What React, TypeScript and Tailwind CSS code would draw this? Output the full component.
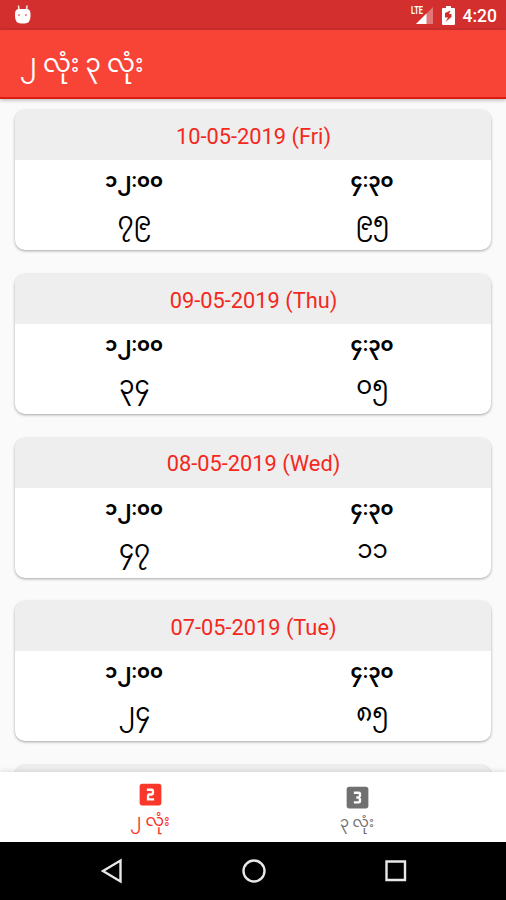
import clsx from "clsx";
import { MdLooks3, MdLooksTwo } from "react-icons/md";

type Draw = { date: string; noon: string; evening: string };

const draws: Draw[] = [
  { date: "10-05-2019 (Fri)", noon: "၇၉", evening: "၉၅" },
  { date: "09-05-2019 (Thu)", noon: "၃၄", evening: "၀၅" },
  { date: "08-05-2019 (Wed)", noon: "၄၇", evening: "၁၁" },
  { date: "07-05-2019 (Tue)", noon: "၂၄", evening: "၈၅" },
];

const StatusBar: React.FC = () => (
  <div className="flex h-[30px] shrink-0 items-center bg-[#d32f2f] pl-[14px] pr-[9px] text-white">
    <svg width="18" height="20" viewBox="0 0 18 20" fill="currentColor">
      <path d="M4.500 .5l.5 4.500M13 .5l-.5 4.500" stroke="currentColor" strokeWidth="1.6" opacity=".85" />
      <path d="M1 9q0-5 4-5h7.500q4 0 4 5v2q0 7.500-6 7.500h-3.500q-6 0-6-7.500z" />
      <circle cx="5" cy="10" r="1" fill="#e07a7a" />
      <circle cx="12" cy="10" r="1" fill="#e07a7a" />
    </svg>
    <div className="ml-auto flex items-center">
      <svg width="23" height="20" viewBox="0 0 23 20" fill="currentColor">
        <path d="M22 2v17H5z" opacity=".35" />
        <path d="M15.500 8.500v10.500H5z" />
        <text
          x="0"
          y="9"
          fontSize="10"
          fontWeight="700"
          textLength="12"
          lengthAdjust="spacingAndGlyphs"
          fontFamily="Roboto, sans-serif"
        >
          LTE
        </text>
      </svg>
      <svg className="ml-2" width="13" height="19" viewBox="0 0 13 19" fill="currentColor">
        <path d="M4 0h5v2h3q1 0 1 1v15q0 1-1 1H1q-1 0-1-1V3q0-1 1-1h3z" />
        <path d="M8.500 4.500L3 7v4.500h3l-2.500 4.500L9.500 11V8H7z" fill="#d32f2f" />
      </svg>
      <span className="ml-2 pt-[3px] text-[17.5px] font-medium leading-none">4:20</span>
    </div>
  </div>
);

const DrawCard: React.FC<{ draw: Draw }> = ({ draw }) => (
  <section className="h-[140px] shrink-0 overflow-hidden rounded-[10px] bg-white shadow-[0_1px_3px_rgba(0,0,0,0.35)]">
    <h2 className="flex h-[50px] items-center justify-center bg-[#eeeeee] pl-px pt-1 text-[21.8px] text-[#f4281c]">
      {draw.date}
    </h2>
    <div className="grid grid-cols-2 text-center text-black">
      <span className="h-[42px] text-[19.5px] font-bold leading-[42px]">၁၂:၀၀</span>
      <span className="h-[42px] text-[19.5px] font-bold leading-[42px]">၄:၃၀</span>
      <span className="h-[46px] pl-px text-[24.5px] leading-[40px]">{draw.noon}</span>
      <span className="h-[46px] pl-px text-[24.5px] leading-[40px]">{draw.evening}</span>
    </div>
  </section>
);

const App: React.FC = () => (
  <div className="flex h-[900px] w-[506px] flex-col overflow-hidden bg-[#fafafa] font-['Roboto','Noto_Sans_Myanmar','Noto_Sans',sans-serif]">
    <StatusBar />
    <header className="z-10 flex h-[69px] shrink-0 items-center border-b-2 border-[#dc1c14] bg-[#f74437] pl-[20px] text-[24.8px] text-white shadow-[0_1px_4px_rgba(0,0,0,0.3)]">
      ၂ လုံး ၃ လုံး
    </header>
    <main className="flex min-h-0 flex-1 flex-col gap-[23.7px] overflow-hidden px-[15px] pt-[11.4px]">
      {draws.map((draw) => (
        <DrawCard key={draw.date} draw={draw} />
      ))}
      {/* top edge of the next card, still below the fold */}
      <div className="h-[50px] shrink-0 rounded-t-[10px] bg-[#eeeeee] shadow-[0_1px_3px_rgba(0,0,0,0.35)]" />
    </main>
    <footer className="flex h-[70px] shrink-0 justify-center bg-white shadow-[0_-1px_5px_rgba(0,0,0,0.12)]">
      {["၂ လုံး", "၃ လုံး"].map((label, i) => (
        <div
          key={label}
          className={clsx(
            "flex w-[207px] flex-col items-center pl-px",
            i === 0 ? "pt-[8px] text-[#f9372b]" : "pt-[11px] text-[#707070]"
          )}
        >
          {i === 0 ? <MdLooksTwo size={29} /> : <MdLooks3 size={29} />}
          <span className={i === 0 ? "text-[16.5px] leading-[24px]" : "text-[14.5px] leading-[22px]"}>{label}</span>
        </div>
      ))}
    </footer>
    <nav className="flex h-[58px] shrink-0 items-center justify-between bg-black pl-[99px] pr-[97px]">
      <svg width="26" height="26" viewBox="0 0 26 26" fill="none" stroke="#e8e8e8" strokeWidth="2.4">
        <path d="M21.500 2.500v21L4 13z" />
      </svg>
      <svg width="26" height="26" viewBox="0 0 26 26" fill="none" stroke="#e8e8e8" strokeWidth="2.4">
        <circle cx="13" cy="13" r="10.5" />
      </svg>
      <svg width="26" height="26" viewBox="0 0 26 26" fill="none" stroke="#e8e8e8" strokeWidth="2.4">
        <path d="M3.500 3.500h18.500v18.500H3.500z" />
      </svg>
    </nav>
  </div>
);

export default App;
